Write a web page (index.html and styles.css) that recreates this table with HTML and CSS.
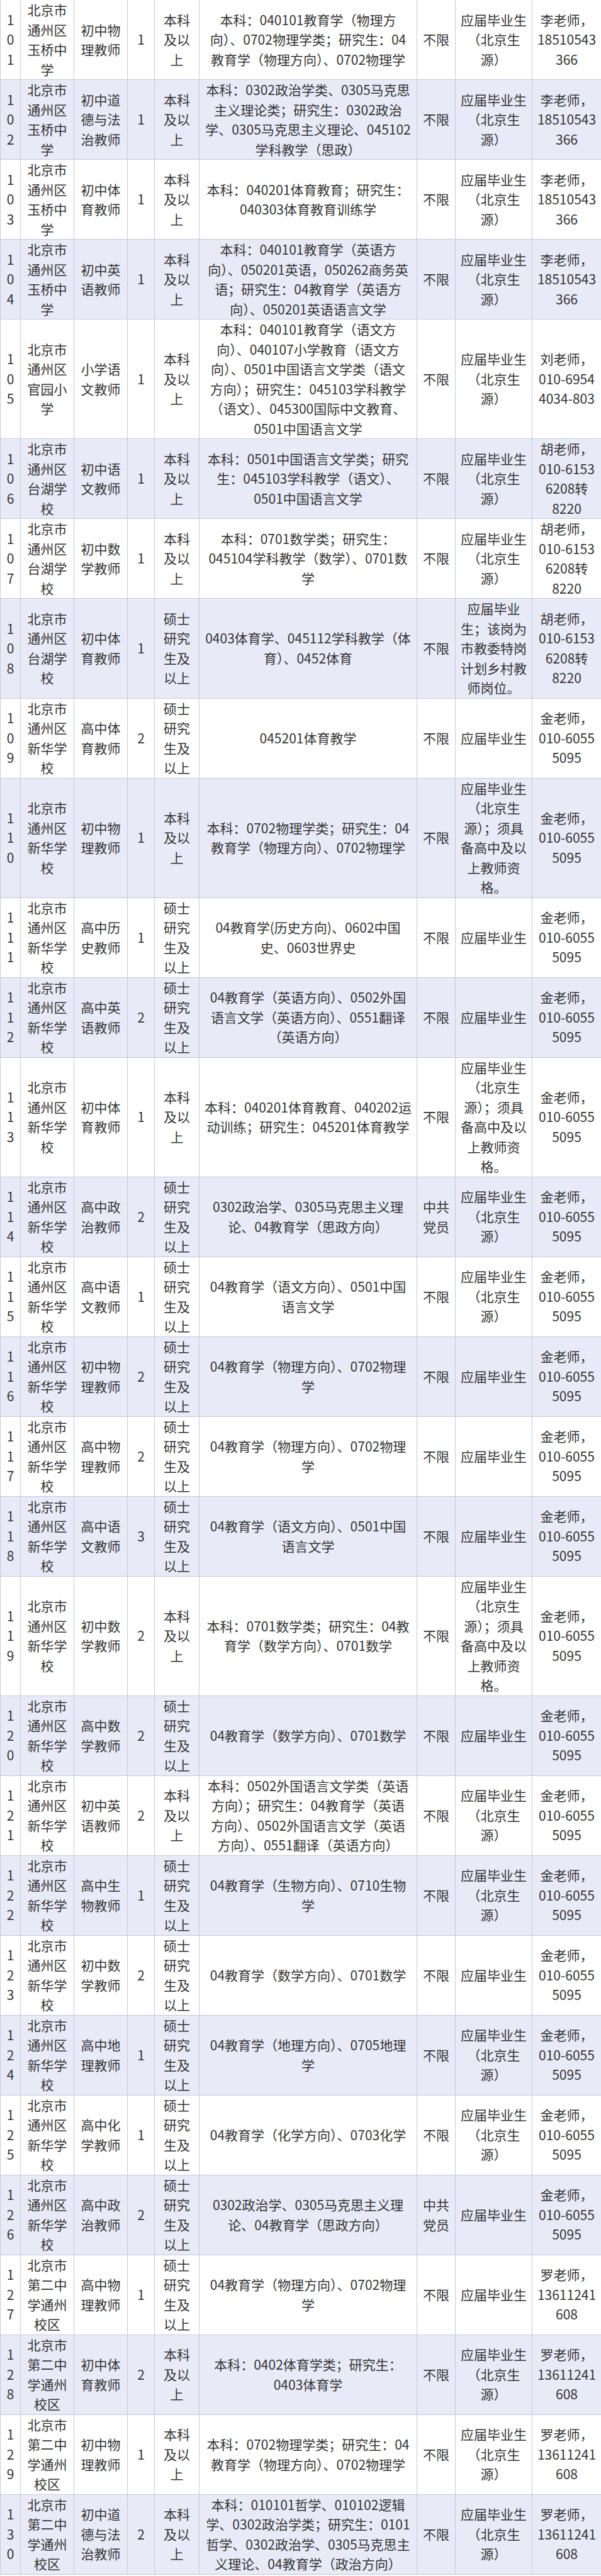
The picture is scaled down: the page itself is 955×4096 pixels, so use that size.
FILE: index.html
```html
<!DOCTYPE html>
<html lang="zh-CN">
<head>
<meta charset="utf-8">
<title>通州区教师招聘岗位表</title>
<link rel="stylesheet" href="styles.css">
</head>
<body>
<table class="jobs">
<colgroup>
<col class="c-no"><col class="c-school"><col class="c-post"><col class="c-num"><col class="c-edu"><col class="c-major"><col class="c-pol"><col class="c-src"><col class="c-tel">
</colgroup>
<tbody>
<tr><td class="no">101</td><td>北京市通州区玉桥中学</td><td>初中物理教师</td><td>1</td><td>本科及以上</td><td>本科：040101教育学（物理方<br>向）、0702物理学类；研究生：04<br>教育学（物理方向）、0702物理学</td><td>不限</td><td>应届毕业生（北京生源）</td><td class="tel">李老师，<br><span class="phone">18510543366</span></td></tr>
<tr><td class="no">102</td><td>北京市通州区玉桥中学</td><td>初中道德与法治教师</td><td>1</td><td>本科及以上</td><td>本科：0302政治学类、0305马克思<br>主义理论类；研究生：0302政治<br>学、0305马克思主义理论、045102<br>学科教学（思政）</td><td>不限</td><td>应届毕业生（北京生源）</td><td class="tel">李老师，<br><span class="phone">18510543366</span></td></tr>
<tr><td class="no">103</td><td>北京市通州区玉桥中学</td><td>初中体育教师</td><td>1</td><td>本科及以上</td><td>本科：040201体育教育；研究生：<br>040303体育教育训练学</td><td>不限</td><td>应届毕业生（北京生源）</td><td class="tel">李老师，<br><span class="phone">18510543366</span></td></tr>
<tr><td class="no">104</td><td>北京市通州区玉桥中学</td><td>初中英语教师</td><td>1</td><td>本科及以上</td><td>本科：040101教育学（英语方<br>向）、050201英语，050262商务英<br>语；研究生：04教育学（英语方<br>向）、050201英语语言文学</td><td>不限</td><td>应届毕业生（北京生源）</td><td class="tel">李老师，<br><span class="phone">18510543366</span></td></tr>
<tr><td class="no">105</td><td>北京市通州区官园小学</td><td>小学语文教师</td><td>1</td><td>本科及以上</td><td>本科：040101教育学（语文方<br>向）、040107小学教育（语文方<br>向）、0501中国语言文学类（语文<br>方向）；研究生：045103学科教学<br>（语文）、045300国际中文教育、<br>0501中国语言文学</td><td>不限</td><td>应届毕业生（北京生源）</td><td class="tel">刘老师，<br><span class="phone">010-69544034-803</span></td></tr>
<tr><td class="no">106</td><td>北京市通州区台湖学校</td><td>初中语文教师</td><td>1</td><td>本科及以上</td><td>本科：0501中国语言文学类；研究<br>生：045103学科教学（语文）、<br>0501中国语言文学</td><td>不限</td><td>应届毕业生（北京生源）</td><td class="tel">胡老师，<br><span class="phone">010-61536208</span>转8220</td></tr>
<tr><td class="no">107</td><td>北京市通州区台湖学校</td><td>初中数学教师</td><td>1</td><td>本科及以上</td><td>本科：0701数学类；研究生：<br>045104学科教学（数学）、0701数<br>学</td><td>不限</td><td>应届毕业生（北京生源）</td><td class="tel">胡老师，<br><span class="phone">010-61536208</span>转8220</td></tr>
<tr><td class="no">108</td><td>北京市通州区台湖学校</td><td>初中体育教师</td><td>1</td><td>硕士研究生及以上</td><td>0403体育学、045112学科教学（体<br>育）、0452体育</td><td>不限</td><td>应届毕业生；该岗为市教委特岗计划乡村教师岗位。</td><td class="tel">胡老师，<br><span class="phone">010-61536208</span>转8220</td></tr>
<tr><td class="no">109</td><td>北京市通州区新华学校</td><td>高中体育教师</td><td>2</td><td>硕士研究生及以上</td><td>045201体育教学</td><td>不限</td><td>应届毕业生</td><td class="tel">金老师，<br><span class="phone">010-60555095</span></td></tr>
<tr><td class="no">110</td><td>北京市通州区新华学校</td><td>初中物理教师</td><td>1</td><td>本科及以上</td><td>本科：0702物理学类；研究生：04<br>教育学（物理方向）、0702物理学</td><td>不限</td><td>应届毕业生（北京生源）；须具备高中及以上教师资格。</td><td class="tel">金老师，<br><span class="phone">010-60555095</span></td></tr>
<tr><td class="no">111</td><td>北京市通州区新华学校</td><td>高中历史教师</td><td>1</td><td>硕士研究生及以上</td><td>04教育学(历史方向)、0602中国<br>史、0603世界史</td><td>不限</td><td>应届毕业生</td><td class="tel">金老师，<br><span class="phone">010-60555095</span></td></tr>
<tr><td class="no">112</td><td>北京市通州区新华学校</td><td>高中英语教师</td><td>2</td><td>硕士研究生及以上</td><td>04教育学（英语方向）、0502外国<br>语言文学（英语方向）、0551翻译<br>（英语方向）</td><td>不限</td><td>应届毕业生</td><td class="tel">金老师，<br><span class="phone">010-60555095</span></td></tr>
<tr><td class="no">113</td><td>北京市通州区新华学校</td><td>初中体育教师</td><td>1</td><td>本科及以上</td><td>本科：040201体育教育、040202运<br>动训练；研究生：045201体育教学</td><td>不限</td><td>应届毕业生（北京生源）；须具备高中及以上教师资格。</td><td class="tel">金老师，<br><span class="phone">010-60555095</span></td></tr>
<tr><td class="no">114</td><td>北京市通州区新华学校</td><td>高中政治教师</td><td>2</td><td>硕士研究生及以上</td><td>0302政治学、0305马克思主义理<br>论、04教育学（思政方向）</td><td>中共党员</td><td>应届毕业生（北京生源）</td><td class="tel">金老师，<br><span class="phone">010-60555095</span></td></tr>
<tr><td class="no">115</td><td>北京市通州区新华学校</td><td>高中语文教师</td><td>1</td><td>硕士研究生及以上</td><td>04教育学（语文方向）、0501中国<br>语言文学</td><td>不限</td><td>应届毕业生（北京生源）</td><td class="tel">金老师，<br><span class="phone">010-60555095</span></td></tr>
<tr><td class="no">116</td><td>北京市通州区新华学校</td><td>初中物理教师</td><td>2</td><td>硕士研究生及以上</td><td>04教育学（物理方向）、0702物理<br>学</td><td>不限</td><td>应届毕业生</td><td class="tel">金老师，<br><span class="phone">010-60555095</span></td></tr>
<tr><td class="no">117</td><td>北京市通州区新华学校</td><td>高中物理教师</td><td>2</td><td>硕士研究生及以上</td><td>04教育学（物理方向）、0702物理<br>学</td><td>不限</td><td>应届毕业生</td><td class="tel">金老师，<br><span class="phone">010-60555095</span></td></tr>
<tr><td class="no">118</td><td>北京市通州区新华学校</td><td>高中语文教师</td><td>3</td><td>硕士研究生及以上</td><td>04教育学（语文方向）、0501中国<br>语言文学</td><td>不限</td><td>应届毕业生</td><td class="tel">金老师，<br><span class="phone">010-60555095</span></td></tr>
<tr><td class="no">119</td><td>北京市通州区新华学校</td><td>初中数学教师</td><td>2</td><td>本科及以上</td><td>本科：0701数学类；研究生：04教<br>育学（数学方向）、0701数学</td><td>不限</td><td>应届毕业生（北京生源）；须具备高中及以上教师资格。</td><td class="tel">金老师，<br><span class="phone">010-60555095</span></td></tr>
<tr><td class="no">120</td><td>北京市通州区新华学校</td><td>高中数学教师</td><td>2</td><td>硕士研究生及以上</td><td>04教育学（数学方向）、0701数学</td><td>不限</td><td>应届毕业生</td><td class="tel">金老师，<br><span class="phone">010-60555095</span></td></tr>
<tr><td class="no">121</td><td>北京市通州区新华学校</td><td>初中英语教师</td><td>2</td><td>本科及以上</td><td>本科：0502外国语言文学类（英语<br>方向）；研究生：04教育学（英语<br>方向）、0502外国语言文学（英语<br>方向）、0551翻译（英语方向）</td><td>不限</td><td>应届毕业生（北京生源）</td><td class="tel">金老师，<br><span class="phone">010-60555095</span></td></tr>
<tr><td class="no">122</td><td>北京市通州区新华学校</td><td>高中生物教师</td><td>1</td><td>硕士研究生及以上</td><td>04教育学（生物方向）、0710生物<br>学</td><td>不限</td><td>应届毕业生（北京生源）</td><td class="tel">金老师，<br><span class="phone">010-60555095</span></td></tr>
<tr><td class="no">123</td><td>北京市通州区新华学校</td><td>初中数学教师</td><td>2</td><td>硕士研究生及以上</td><td>04教育学（数学方向）、0701数学</td><td>不限</td><td>应届毕业生</td><td class="tel">金老师，<br><span class="phone">010-60555095</span></td></tr>
<tr><td class="no">124</td><td>北京市通州区新华学校</td><td>高中地理教师</td><td>1</td><td>硕士研究生及以上</td><td>04教育学（地理方向）、0705地理<br>学</td><td>不限</td><td>应届毕业生（北京生源）</td><td class="tel">金老师，<br><span class="phone">010-60555095</span></td></tr>
<tr><td class="no">125</td><td>北京市通州区新华学校</td><td>高中化学教师</td><td>1</td><td>硕士研究生及以上</td><td>04教育学（化学方向）、0703化学</td><td>不限</td><td>应届毕业生（北京生源）</td><td class="tel">金老师，<br><span class="phone">010-60555095</span></td></tr>
<tr><td class="no">126</td><td>北京市通州区新华学校</td><td>高中政治教师</td><td>2</td><td>硕士研究生及以上</td><td>0302政治学、0305马克思主义理<br>论、04教育学（思政方向）</td><td>中共党员</td><td>应届毕业生</td><td class="tel">金老师，<br><span class="phone">010-60555095</span></td></tr>
<tr><td class="no">127</td><td>北京市第二中学通州校区</td><td>高中物理教师</td><td>1</td><td>硕士研究生及以上</td><td>04教育学（物理方向）、0702物理<br>学</td><td>不限</td><td>应届毕业生</td><td class="tel">罗老师，<br><span class="phone">13611241608</span></td></tr>
<tr><td class="no">128</td><td>北京市第二中学通州校区</td><td>初中体育教师</td><td>2</td><td>本科及以上</td><td>本科：0402体育学类；研究生：<br>0403体育学</td><td>不限</td><td>应届毕业生（北京生源）</td><td class="tel">罗老师，<br><span class="phone">13611241608</span></td></tr>
<tr><td class="no">129</td><td>北京市第二中学通州校区</td><td>初中物理教师</td><td>1</td><td>本科及以上</td><td>本科：0702物理学类；研究生：04<br>教育学（物理方向）、0702物理学</td><td>不限</td><td>应届毕业生（北京生源）</td><td class="tel">罗老师，<br><span class="phone">13611241608</span></td></tr>
<tr><td class="no">130</td><td>北京市第二中学通州校区</td><td>初中道德与法治教师</td><td>2</td><td>本科及以上</td><td>本科：010101哲学、010102逻辑<br>学、0302政治学类；研究生：0101<br>哲学、0302政治学、0305马克思主<br>义理论、04教育学（政治方向）</td><td>不限</td><td>应届毕业生（北京生源）</td><td class="tel">罗老师，<br><span class="phone">13611241608</span></td></tr>
</tbody>
</table>
</body>
</html>
```

FILE: styles.css
```css
html, body {
  margin: 0;
  padding: 0;
  background: #ffffff;
}

body {
  font-family: "Noto Sans CJK SC", "Noto Sans", sans-serif;
  color: #353535;
  font-size: 21px;
  line-height: 31.5px;
}

.jobs {
  width: 955px;
  border-collapse: collapse;
  table-layout: fixed;
}

.c-no { width: 32px; }
.c-school { width: 85px; }
.c-post { width: 85px; }
.c-num { width: 43px; }
.c-edu { width: 71px; }
.c-major { width: 346px; }
.c-pol { width: 61px; }
.c-src { width: 122px; }
.c-tel { width: 110px; }

.jobs td {
  border: 1px solid #c6c9da;
  padding: 0 5px;
  text-align: center;
  vertical-align: middle;
  line-height: 31.5px;
}

.jobs tr:first-child td {
  border-top: 0;
}

.jobs tr:nth-child(even) td {
  background: #e8eaf8;
}

.jobs td.no {
  word-break: break-all;
}

.jobs td.tel {
  padding: 0 6px;
  overflow-wrap: anywhere;
}

.phone {
  word-break: break-all;
}
```
